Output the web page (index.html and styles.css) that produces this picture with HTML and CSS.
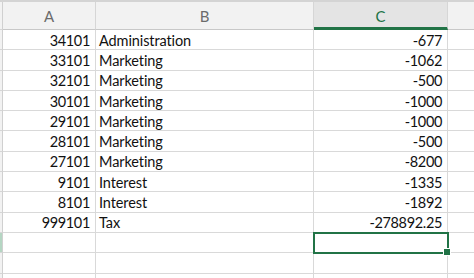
FILE: index.html
```html
<!DOCTYPE html>
<html>
<head>
<meta charset="utf-8">
<link rel="stylesheet" href="styles.css">
</head>
<body>
<div class="sheet">
  <div class="hd rh"></div>
  <div class="hd">A</div>
  <div class="hd">B</div>
  <div class="hd sel">C</div>
  <div class="hd last"></div>

  <div class="rh"></div><div class="c n">34101</div><div class="c">Administration</div><div class="c n">-677</div><div class="c last"></div>
  <div class="rh"></div><div class="c n">33101</div><div class="c">Marketing</div><div class="c n">-1062</div><div class="c last"></div>
  <div class="rh"></div><div class="c n">32101</div><div class="c">Marketing</div><div class="c n">-500</div><div class="c last"></div>
  <div class="rh"></div><div class="c n">30101</div><div class="c">Marketing</div><div class="c n">-1000</div><div class="c last"></div>
  <div class="rh"></div><div class="c n">29101</div><div class="c">Marketing</div><div class="c n">-1000</div><div class="c last"></div>
  <div class="rh"></div><div class="c n">28101</div><div class="c">Marketing</div><div class="c n">-500</div><div class="c last"></div>
  <div class="rh"></div><div class="c n">27101</div><div class="c">Marketing</div><div class="c n">-8200</div><div class="c last"></div>
  <div class="rh"></div><div class="c n">9101</div><div class="c">Interest</div><div class="c n">-1335</div><div class="c last"></div>
  <div class="rh"></div><div class="c n">8101</div><div class="c">Interest</div><div class="c n">-1892</div><div class="c last"></div>
  <div class="rh"></div><div class="c n">999101</div><div class="c">Tax</div><div class="c n">-278892.25</div><div class="c last"></div>
  <div class="rh rsel"></div><div class="c"></div><div class="c"></div><div class="c active"><span class="handle"></span></div><div class="c last"></div>
  <div class="rh"></div><div class="c"></div><div class="c"></div><div class="c"></div><div class="c last"></div>
  <div class="rh"></div><div class="c"></div><div class="c"></div><div class="c"></div><div class="c last"></div>
</div>
</body>
</html>
```
FILE: styles.css
```css
html, body {
  margin: 0;
  padding: 0;
  background: #ffffff;
  overflow: hidden;
}
.sheet {
  display: grid;
  grid-template-columns: 3px 93px 218px 134px 1fr;
  grid-template-rows: 28px;
  grid-auto-rows: 20.3px;
  font-family: Lato, "Open Sans", sans-serif;
  font-size: 14.5px;
  letter-spacing: -0.1px;
  color: #111;
  border-top: 2px solid #d4d4d4;
  box-sizing: border-box;
  width: 474px;
  height: 278px;
  overflow: hidden;
}
.hd {
  background: #f2f2f2;
  color: #6b6b6b;
  font-size: 15px;
  display: flex;
  align-items: center;
  justify-content: center;
  border-right: 1px solid #d6d6d6;
  border-bottom: 1px solid #c8c8c8;
  box-sizing: border-box;
  padding-top: 1px;
}
.hd.sel {
  background: #e4e4e4;
  color: #217346;
  border-bottom: 3px solid #217346;
  padding-top: 3px;
}
.rh {
  background: #f2f2f2;
  border-right: 1px solid #d0d0d0;
  border-bottom: 1px solid #d6d6d6;
  box-sizing: border-box;
}
.rh.rsel {
  background: #b5d6c3;
}
.c {
  border-right: 1px solid #d9d9d9;
  border-bottom: 1px solid #d9d9d9;
  box-sizing: border-box;
  display: flex;
  align-items: center;
  padding: 1px 3px 0 3px;
  white-space: nowrap;
}
.c.n {
  justify-content: flex-end;
  padding-right: 5px;
  letter-spacing: -0.35px;
}
.c.last, .hd.last {
  border-right: none;
}
.active {
  position: relative;
  outline: 2px solid #217346;
  outline-offset: -1px;
}
.handle {
  position: absolute;
  right: -4px;
  bottom: -4px;
  width: 6px;
  height: 6px;
  background: #217346;
  border: 1px solid #ffffff;
}
```
